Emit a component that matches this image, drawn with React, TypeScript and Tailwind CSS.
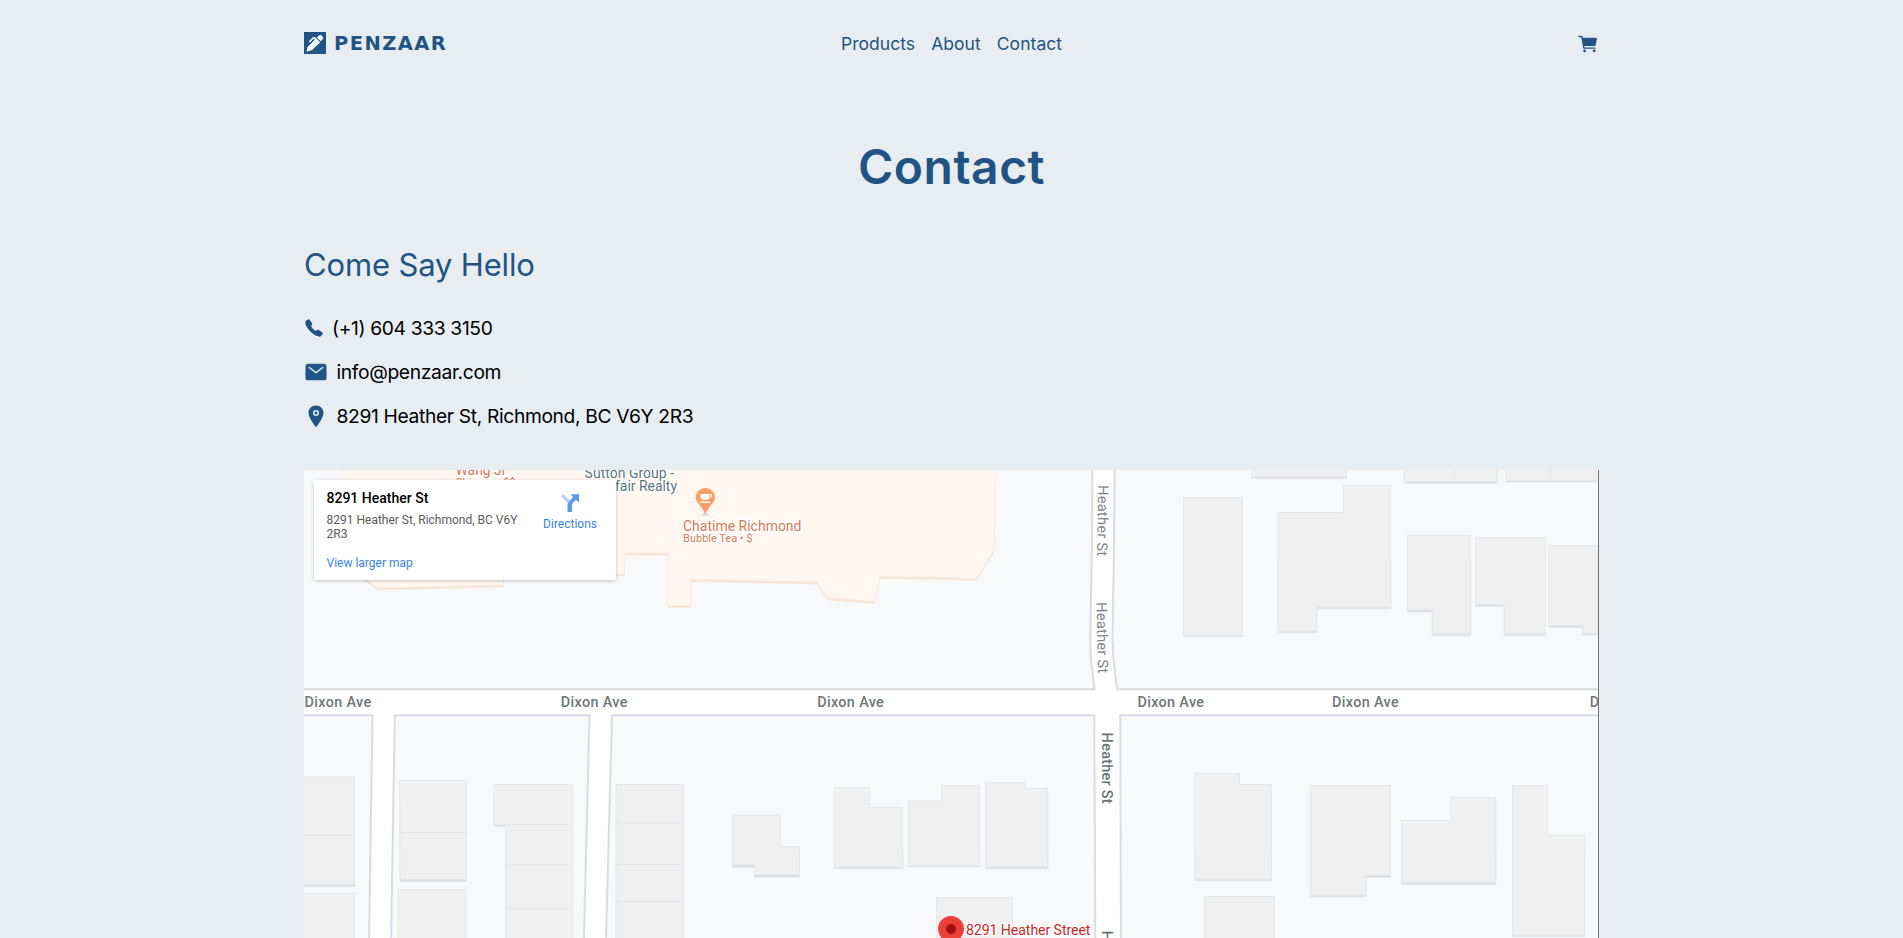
import { IoCall, IoCart, IoLocation, IoMail } from "react-icons/io5";

type Building = { face: string; base: string; seams?: string };

const buildings: Building[] = [
  { face: "M1251.5 465H1346.5V477H1251.5Z", base: "M1251.5 470H1346.5V478.3H1251.5Z" },
  { face: "M1183.5 497.5H1242.5V635.3H1183.5Z", base: "M1183.5 600H1242.5V636.5H1183.5Z" },
  {
    face: "M1278.3 512.5H1343.5V485.5H1390.7V607H1316.7V631H1278.3Z",
    base: "M1278.3 560H1390.7V608.6H1316.7V632.6H1278.3Z",
  },
  { face: "M1404.3 465H1497V481.5H1404.3Z", base: "M1404.3 470H1497V483.3H1404.3Z", seams: "M1454.5 470V481" },
  { face: "M1506.3 465H1596.5V480.5H1506.3Z", base: "M1506.3 470H1596.5V482H1506.3Z", seams: "M1550 470V480" },
  {
    face: "M1407.5 535.5H1470.7V634H1432.3V610H1407.5Z",
    base: "M1407.5 560H1470.7V635.8H1432.3V612H1407.5Z",
  },
  {
    face: "M1475.5 537.5H1545.5V634H1504.3V604.5H1475.5Z",
    base: "M1475.5 560H1545.5V635.8H1504.3V606.4H1475.5Z",
  },
  {
    face: "M1549 545.5H1605V633.5H1582.5V625.7H1549Z",
    base: "M1549 560H1605V635H1582.5V627.5H1549Z",
  },
  { face: "M300 777H354.5V884.5H300Z", base: "M300 850H354.5V886.6H300Z", seams: "M300 835.3H354.5" },
  { face: "M300 893H354.5V945H300Z", base: "" },
  { face: "M399.5 780.5H466.5V879.5H400Z", base: "M400 850H466.5V881.6H400Z", seams: "M399.5 832.5H466.5" },
  { face: "M398 889.5H465.7V945H398Z", base: "" },
  {
    face: "M494 784.5H572.7V945H505.5V824.5H494Z",
    base: "M494 800H510V826.3H494Z",
    seams: "M505.5 824.5H572.7M505.5 865H572.7M505.5 908.3H572.7",
  },
  {
    face: "M616 784.5H683.5V945H616Z",
    base: "",
    seams: "M616 822.5H683.5M616 864.5H683.5M616 901.5H683.5",
  },
  {
    face: "M732.5 815H780.5V846.5H799.3V874.5H754.5V864.8H732.5Z",
    base: "M732.5 850H799.3V877H754.5V867.3H732.5Z",
  },
  { face: "M834.5 787.5H869.5V807.5H902.8V867H834.5Z", base: "M834.5 850H902.8V868.6H834.5Z" },
  { face: "M908.5 801H941.5V785.7H979.6V865.3H908.5Z", base: "M908.5 850H979.6V866.8H908.5Z" },
  { face: "M985.5 782.5H1025V788.5H1047.6V867H985.5Z", base: "M985.5 850H1047.6V868.6H985.5Z" },
  { face: "M936.5 897.5H1012.5V945H936.5Z", base: "" },
  { face: "M1195 773.5H1239.5V784.5H1271.2V879H1195Z", base: "M1195 850H1271.2V880.6H1195Z" },
  { face: "M1204.5 896.5H1274.5V945H1204.5Z", base: "" },
  {
    face: "M1310.5 785.5H1390.5V875.5H1366.3V895H1310.5Z",
    base: "M1310.5 850H1390.5V877.2H1366.3V896.7H1310.5Z",
  },
  { face: "M1401.5 820.5H1451V797.5H1495.6V882.5H1401.5Z", base: "M1401.5 850H1495.6V884.2H1401.5Z" },
  { face: "M1512.5 785.5H1547.7V835H1584.7V935H1512.5Z", base: "M1512.5 850H1584.7V936.6H1512.5Z" },
];

const blocks = [
  "M290 460H1092.5L1092 540L1090.3 640L1091 660L1094.5 689.3H290Z",
  "M1114.7 460L1113.8 560L1112.5 640L1113.5 660L1117 689.3H1610V460Z",
  "M290 715.2H372.5L369 945H290Z",
  "M394.8 715.2H589.5L583.8 945H391Z",
  "M612 715.2H1094.3L1095.3 945H605.8Z",
  "M1120.3 715.2H1610V945H1121Z",
];

const mall =
  "M352 460L335 480L345 570L367 580L377 588L503.7 585V575.500L624.7 574V553H667.9V605.5H690.9V579.5L816.7 582L827.7 598L875 601.5L880.2 576.5L935 577.2L976.5 578.5L994 550L995 505L996.5 460Z";

const dixonLabels = [304.6, 560.8, 817.2, 1137.4, 1332, 1589.7];

const heatherLabels = [
  { x: 1098.3, y: 485, turn: 91, color: "#7f8386", weight: 400 },
  { x: 1096.5, y: 602.3, turn: 88.8, color: "#7f8386", weight: 400 },
  { x: 1102, y: 732.6, turn: 90, color: "#6b7475", weight: 500 },
  { x: 1102, y: 930.8, turn: 90, color: "#6b7475", weight: 500 },
];

function StreetMap() {
  return (
    <svg width="1294" height="468" viewBox="304 470 1294 468" className="block bg-white font-['Roboto',sans-serif]">
      {blocks.map((d) => (
        <path key={d} d={d} fill="#f8f9fb" stroke="#dadce1" strokeWidth="2" />
      ))}
      <path d={mall} transform="translate(0 2.2)" fill="#f6e4d3" />
      <path d={mall} fill="#fff7f0" stroke="#fae9da" strokeWidth="0.8" />
      {buildings.map((b) => (
        <g key={b.face}>
          <path d={b.base} fill="#dcdee0" stroke="#dcdee0" strokeWidth="0.6" />
          <path d={b.face} fill="#f0f0f0" stroke="#e6e7e8" strokeWidth="1" />
          {b.seams && <path d={b.seams} fill="none" stroke="#e5e6e7" strokeWidth="1" />}
        </g>
      ))}

      <g fontSize="14.4" fontWeight="500" fill="#6e7778">
        {dixonLabels.map((x) => (
          <text key={x} x={x} y="707.4" textLength="66.6" stroke="#fff" strokeWidth="2" paintOrder="stroke">
            Dixon Ave
          </text>
        ))}
      </g>
      <g fontSize="14.6">
        {heatherLabels.map((l) => (
          <text
            key={l.y}
            transform={`translate(${l.x} ${l.y}) rotate(${l.turn})`}
            textLength="71"
            fontWeight={l.weight}
            fill={l.color}
          >
            Heather St
          </text>
        ))}
      </g>

      <g stroke="#fff" strokeWidth="2.5" strokeLinejoin="round" paintOrder="stroke">
        <g fill="#d27a55">
          <text x="455.5" y="475.3" fontSize="14" textLength="49.5">Wang Ji</text>
          <text x="455.5" y="486" fontSize="11" textLength="60">Chinese • $$</text>
          <text x="683" y="531" fontSize="14" textLength="118.5">Chatime Richmond</text>
          <text x="683" y="542" fontSize="11.2" textLength="69.5">Bubble Tea • $</text>
        </g>
        <g fill="#5c7680" fontSize="14">
          <text x="584.6" y="477.6" textLength="89.5">Sutton Group -</text>
          <text x="615" y="491" textLength="62">fair Realty</text>
        </g>
        <text x="966" y="935.2" fontSize="14.2" textLength="124.5" fill="#c5281f">8291 Heather Street</text>
      </g>

      <ellipse cx="705.4" cy="514.8" rx="3.4" ry="1.7" fill="#e3dfe0" />
      <path d="M705.4 488a9.6 9.6 0 0 1 9.600 9.600c0 5.400-6.600 8.400-9.600 17.200c-3-8.800-9.600-11.800-9.600-17.200a9.600 9.600 0 0 1 9.600-9.600Z" fill="#ff9e67" />
      <path d="M700.3 494h11.500v3.300h-2.200c-.3 1.500-1.100 2.400-2.200 2.400h-4.300c-1.700 0-2.800-2-2.800-5.700ZM700.300 501.500h10v1.500h-10z" fill="#fff" />
      <path d="M709.2 495h1.500v1.500h-1.500z" fill="#ff9e67" />

      <path d="M951 916a13 13 0 0 1 13 13c0 7-8 13-10 22h-6c-2-9-10-15-10-22a13 13 0 0 1 13-13Z" fill="#ea4035" />
      <circle cx="951" cy="929" r="5" fill="#a50e0e" />
    </svg>
  );
}

function PlaceCard() {
  return (
    <div className="absolute left-[10px] top-[10px] flex h-[100px] w-[302px] justify-between rounded-[2px] bg-white pl-[12.5px] pr-[19px] pt-[9px] font-['Roboto',sans-serif] shadow-[0_1px_4px_-1px_rgba(0,0,0,0.35)]">
      <div className="w-[200px] text-[12px] leading-[14px] text-[#5b5b5b]">
        <div className="text-[14px] font-medium leading-[19px] text-black">8291 Heather St</div>
        <div className="mt-[5px]">8291 Heather St, Richmond, BC V6Y 2R3</div>
        <div className="mt-[15px] text-[#3a84df]">View larger map</div>
      </div>
      <div className="flex flex-col items-center pt-[5px] text-[12px] leading-[14px] text-[#3a84df]">
        <svg width="18" height="18" viewBox="0 0 18 18">
          <path d="M0 2.500L2.300 0.300L8.500 6.300L6.800 9.300Z" fill="#b7d2f6" />
          <path d="M6.500 18V11.500c0-2.200.8-3.400 2.200-4.800L12 3.300L9.500 0.300H18V8.500L15 6L11.800 9.100c-.6.600-.8 1.200-.8 2.400V18Z" fill="#629be8" />
        </svg>
        <span className="mt-[5px]">Directions</span>
      </div>
    </div>
  );
}

function Logo() {
  return (
    <div className="flex items-center gap-[8px]">
      <svg width="22" height="22" viewBox="0 0 22 22" className="-mt-[2px]">
        <path d="M0 0h22v22H0z" fill="#1f5485" />
        <path d="M2.700 19.800L3.400 15.300L10.800 7.800L9.700 6.700L5.800 10.600L4.700 9.500L8.900 5.200C9.600 4.500 10.300 4.500 11 5.200L12.200 6.300L16.200 10.300L8.200 18.100Z" fill="#fff" />
        <path d="M12.900 5.600L14.700 3.700C15.600 2.800 16.900 2.800 17.800 3.700L18.400 4.300C19.300 5.200 19.300 6.500 18.400 7.400L16.700 9.300Z" fill="#fff" />
      </svg>
      <span className="font-['DejaVu_Sans',sans-serif] text-[19.5px] font-bold leading-[28px] tracking-[1.4px]">
        PENZAAR
      </span>
    </div>
  );
}

export default function App() {
  return (
    <div className="h-[938px] overflow-hidden bg-[#e8edf1] font-['Inter',sans-serif] text-[#1f5485]">
      <div className="mx-auto w-[1295px]">
        <header className="grid h-[88px] grid-cols-3 items-center">
          <Logo />
          <nav className="flex justify-center gap-[16px] text-[17.5px] tracking-[0.05px]">
            <a>Products</a>
            <a>About</a>
            <a>Contact</a>
          </nav>
          <div className="flex justify-end">
            <IoCart className="size-[22px]" />
          </div>
        </header>

        <h1 className="mt-[55px] text-center text-[48px] font-semibold leading-[48px] tracking-[0.5px]">Contact</h1>

        <h2 className="mt-[54px] text-[31px] leading-[40px] tracking-[-0.15px]">Come Say Hello</h2>

        <ul className="mt-[29px] flex flex-col gap-[16px] text-[19.25px] leading-[28px] tracking-[-0.36px]">
          <li className="flex items-center">
            <IoCall className="size-[20px]" />
            <span className="ml-[8px] text-black">(+1) 604 333 3150</span>
          </li>
          <li className="flex items-center">
            <IoMail className="size-[24px]" />
            <span className="ml-[8.5px] text-black">info@penzaar.com</span>
          </li>
          <li className="flex items-center">
            <IoLocation className="size-[24px]" />
            <span className="ml-[8.5px] text-black">8291 Heather St, Richmond, BC V6Y 2R3</span>
          </li>
        </ul>

        <section className="relative mt-[40px] border-r border-[#74787b]">
          <StreetMap />
          <PlaceCard />
        </section>
      </div>
    </div>
  );
}
